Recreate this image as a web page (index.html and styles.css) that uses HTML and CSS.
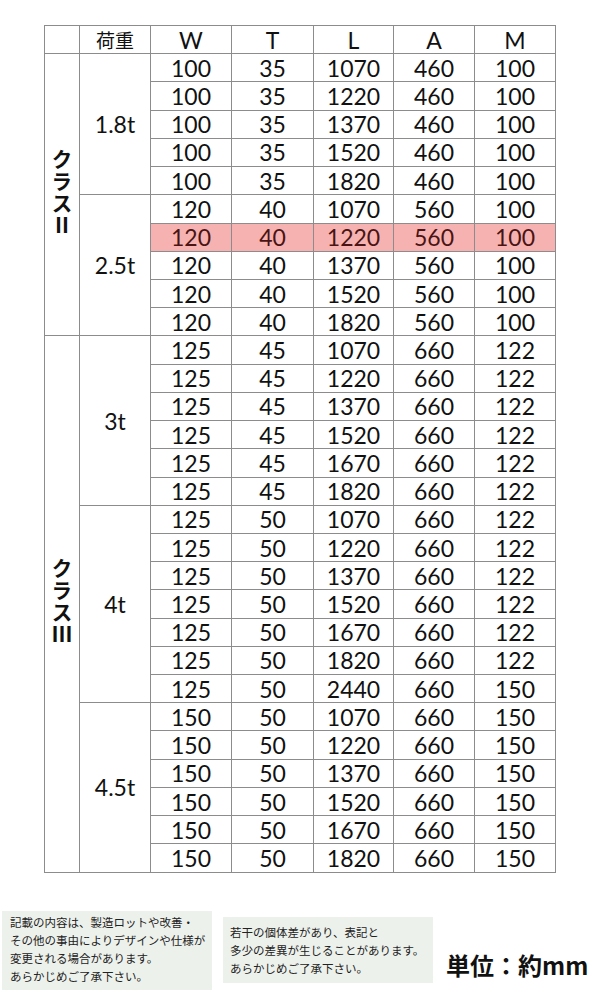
FILE: index.html
```html
<!DOCTYPE html>
<html lang="ja">
<head>
<meta charset="utf-8">
<link rel="stylesheet" href="styles.css">
</head>
<body>
<table class="spec">
  <colgroup>
    <col class="c-class"><col class="c-load"><col class="c-w"><col class="c-t"><col class="c-l"><col class="c-a"><col class="c-m">
  </colgroup>
  <thead>
    <tr><th></th><th class="jp">荷重</th><th>W</th><th>T</th><th>L</th><th>A</th><th>M</th></tr>
  </thead>
  <tbody>
    <tr><td class="cls" rowspan="10"><span class="vert">クラスⅡ</span></td><td class="load" rowspan="5">1.8t</td><td>100</td><td>35</td><td>1070</td><td>460</td><td>100</td></tr>
    <tr><td>100</td><td>35</td><td>1220</td><td>460</td><td>100</td></tr>
    <tr><td>100</td><td>35</td><td>1370</td><td>460</td><td>100</td></tr>
    <tr><td>100</td><td>35</td><td>1520</td><td>460</td><td>100</td></tr>
    <tr><td>100</td><td>35</td><td>1820</td><td>460</td><td>100</td></tr>
    <tr><td class="load" rowspan="5">2.5t</td><td>120</td><td>40</td><td>1070</td><td>560</td><td>100</td></tr>
    <tr class="hl"><td>120</td><td>40</td><td>1220</td><td>560</td><td>100</td></tr>
    <tr><td>120</td><td>40</td><td>1370</td><td>560</td><td>100</td></tr>
    <tr><td>120</td><td>40</td><td>1520</td><td>560</td><td>100</td></tr>
    <tr><td>120</td><td>40</td><td>1820</td><td>560</td><td>100</td></tr>
    <tr><td class="cls" rowspan="19"><span class="vert">クラスⅢ</span></td><td class="load" rowspan="6">3t</td><td>125</td><td>45</td><td>1070</td><td>660</td><td>122</td></tr>
    <tr><td>125</td><td>45</td><td>1220</td><td>660</td><td>122</td></tr>
    <tr><td>125</td><td>45</td><td>1370</td><td>660</td><td>122</td></tr>
    <tr><td>125</td><td>45</td><td>1520</td><td>660</td><td>122</td></tr>
    <tr><td>125</td><td>45</td><td>1670</td><td>660</td><td>122</td></tr>
    <tr><td>125</td><td>45</td><td>1820</td><td>660</td><td>122</td></tr>
    <tr><td class="load" rowspan="7">4t</td><td>125</td><td>50</td><td>1070</td><td>660</td><td>122</td></tr>
    <tr><td>125</td><td>50</td><td>1220</td><td>660</td><td>122</td></tr>
    <tr><td>125</td><td>50</td><td>1370</td><td>660</td><td>122</td></tr>
    <tr><td>125</td><td>50</td><td>1520</td><td>660</td><td>122</td></tr>
    <tr><td>125</td><td>50</td><td>1670</td><td>660</td><td>122</td></tr>
    <tr><td>125</td><td>50</td><td>1820</td><td>660</td><td>122</td></tr>
    <tr><td>125</td><td>50</td><td>2440</td><td>660</td><td>150</td></tr>
    <tr><td class="load" rowspan="6">4.5t</td><td>150</td><td>50</td><td>1070</td><td>660</td><td>150</td></tr>
    <tr><td>150</td><td>50</td><td>1220</td><td>660</td><td>150</td></tr>
    <tr><td>150</td><td>50</td><td>1370</td><td>660</td><td>150</td></tr>
    <tr><td>150</td><td>50</td><td>1520</td><td>660</td><td>150</td></tr>
    <tr><td>150</td><td>50</td><td>1670</td><td>660</td><td>150</td></tr>
    <tr><td>150</td><td>50</td><td>1820</td><td>660</td><td>150</td></tr>
  </tbody>
</table>

<div class="notes">
  <div class="note note-1">記載の内容は、製造ロットや改善・<br>その他の事由によりデザインや仕様が<br>変更される場合があります。<br>あらかじめご了承下さい。</div>
  <div class="note note-2">若干の個体差があり、表記と<br>多少の差異が生じることがあります。<br>あらかじめご了承下さい。</div>
  <div class="unit">単位：約mm</div>
</div>
</body>
</html>
```

FILE: styles.css
```css
html, body {
  margin: 0;
  padding: 0;
  background: #ffffff;
}

body {
  width: 600px;
  height: 1000px;
  overflow: hidden;
  font-family: Lato, "Open Sans", "Noto Sans CJK JP", sans-serif;
  color: #111;
}

.spec {
  border-collapse: collapse;
  table-layout: fixed;
  width: 511px;
  margin: 25px 0 0 44px;
}

.c-class { width: 35px; }
.c-load { width: 71px; }
.c-w { width: 81px; }
.c-t { width: 82px; }
.c-l { width: 80px; }
.c-a { width: 81px; }
.c-m { width: 81px; }

.spec th,
.spec td {
  border: 1px solid #8c8c8c;
  padding: 0;
  text-align: center;
  vertical-align: middle;
  font-size: 23px;
  font-weight: 400;
  line-height: 26px;
  color: #111;
}

.spec tr {
  height: 28.23px;
}

.spec th.jp {
  font-family: "Noto Sans CJK JP", sans-serif;
  font-size: 19px;
  line-height: 26px;
}

.spec td.cls {
  padding: 0;
}

.vert {
  display: inline-block;
  writing-mode: vertical-rl;
  text-orientation: upright;
  font-family: "Noto Sans CJK JP", sans-serif;
  font-weight: 700;
  font-size: 21px;
  line-height: 24px;
  letter-spacing: 1px;
  color: #111;
}

.spec tr.hl td {
  background: #f6b2b0;
  color: #4a1414;
}

.notes {
  display: flex;
  align-items: flex-start;
  margin-top: 38px;
  font-family: "Noto Sans CJK JP", sans-serif;
}

.note {
  background: #edf1ec;
  color: #222;
  font-size: 11.5px;
  line-height: 18px;
  white-space: nowrap;
}

.note-1 {
  margin-left: 2px;
  width: 202px;
  padding: 2px 0 5px 8px;
}

.note-2 {
  margin-left: 11px;
  margin-top: 6px;
  width: 203px;
  padding: 6px 0 6px 7px;
}

.unit {
  margin-left: 13px;
  margin-top: 39px;
  font-size: 24px;
  font-weight: 700;
  line-height: 30px;
  color: #111;
  white-space: nowrap;
}
```
